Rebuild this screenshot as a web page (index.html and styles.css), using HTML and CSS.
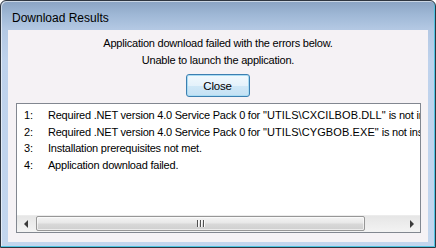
FILE: index.html
```html
<!DOCTYPE html>
<html>
<head>
<meta charset="utf-8">
<link rel="stylesheet" href="styles.css">
</head>
<body>
<div class="window">
  <div class="titlebar">Download Results</div>
  <div class="panel">
    <div class="msg">Application download failed with the errors below.<br>Unable to launch the application.</div>
    <div class="btnrow"><button class="btn">Close</button></div>
    <div class="list">
      <div class="rows">
        <div class="row"><span class="num">1:</span><span>Required .NET version 4.0 Service Pack 0 for <span class="path">"UTILS\CXCILBOB.DLL"</span> is not installed.</span></div>
        <div class="row"><span class="num">2:</span><span>Required .NET version 4.0 Service Pack 0 for <span class="path">"UTILS\CYGBOB.EXE"</span> is not installed.</span></div>
        <div class="row"><span class="num">3:</span><span>Installation prerequisites not met.</span></div>
        <div class="row"><span class="num">4:</span><span>Application download failed.</span></div>
      </div>
      <div class="hscroll">
        <div class="arrow"><span class="tri-left"></span></div>
        <div class="track">
          <div class="thumb"><span class="grip"></span><span class="grip"></span><span class="grip"></span></div>
        </div>
        <div class="arrow"><span class="tri-right"></span></div>
      </div>
    </div>
  </div>
</div>
</body>
</html>
```

FILE: styles.css
```css
html, body {
  margin: 0;
  padding: 0;
  background: #ffffff;
}

.window {
  width: 436px;
  height: 248px;
  box-sizing: border-box;
  border: 1px solid #2f3640;
  border-radius: 6px 6px 0 0;
  background: linear-gradient(to bottom, #8aa3c3 0px, #9fb8d6 14px, #b3c8e3 28px, #bed2ec 60px, #c3d6ee 100%);
  box-shadow: inset -1px -1px 0 #4fc4e2, inset 1px 1px 0 rgba(255,255,255,0.55);
  padding: 0 7px 5px 7px;
  display: flex;
  flex-direction: column;
  font-family: "Liberation Sans", Arial, sans-serif;
}

.titlebar {
  height: 29px;
  box-sizing: border-box;
  padding: 10px 0 0 4px;
  font-size: 12px;
  line-height: 14px;
  color: #000;
}

.panel {
  flex: 1;
  background: #f5f2f5;
  display: flex;
  flex-direction: column;
  min-height: 0;
}

.msg {
  padding-top: 5px;
  text-align: center;
  font-size: 11px;
  line-height: 17px;
  letter-spacing: -0.22px;
  color: #000;
}

.btnrow {
  display: flex;
  justify-content: center;
  margin-top: 5px;
}

.btn {
  width: 64px;
  height: 23px;
  box-sizing: border-box;
  margin: 0 0 0 -1px;
  padding: 0;
  border: 1px solid #3c7fb1;
  border-radius: 3px;
  background: linear-gradient(to bottom, #f2f9fd 0%, #e4f2fb 50%, #d0e8f7 51%, #c4e1f4 100%);
  box-shadow: inset 0 0 0 1px #a9dcf3;
  font-family: "Liberation Sans", Arial, sans-serif;
  font-size: 11.5px;
  letter-spacing: -0.2px;
  color: #000;
}

.list {
  margin: 6px 7px 0 8px;
  height: 130px;
  box-sizing: border-box;
  border: 1px solid #828790;
  background: #fff;
  display: flex;
  flex-direction: column;
}

.rows {
  flex: 1;
  overflow: hidden;
  padding: 3px 0 0 7px;
}

.row {
  display: flex;
  white-space: nowrap;
  font-size: 11px;
  line-height: 16.67px;
  letter-spacing: -0.22px;
  color: #000;
}

.path {
  letter-spacing: 0.1px;
}

.num {
  width: 24px;
  flex: none;
}

.hscroll {
  height: 17px;
  display: flex;
  background: linear-gradient(to bottom, #e6e6e6 0%, #f3f3f3 100%);
  border-top: 1px solid #ececec;
  box-sizing: border-box;
}

.arrow {
  width: 17px;
  flex: none;
  display: flex;
  align-items: center;
  justify-content: center;
}

.tri-left {
  width: 0;
  height: 0;
  border-top: 4px solid transparent;
  border-bottom: 4px solid transparent;
  border-right: 4px solid #3a3a3a;
}

.tri-right {
  width: 0;
  height: 0;
  border-top: 4px solid transparent;
  border-bottom: 4px solid transparent;
  border-left: 4px solid #3a3a3a;
}

.track {
  flex: 1;
  display: flex;
  padding: 0 0 0 2px;
}

.thumb {
  width: 329px;
  height: 15px;
  box-sizing: border-box;
  border: 1px solid #979797;
  border-radius: 2px;
  background: linear-gradient(to bottom, #f4f4f4 0%, #e8e8e8 45%, #d8d8d8 55%, #cfcfcf 100%);
  box-shadow: inset 0 0 0 1px rgba(255,255,255,0.6);
  display: flex;
  align-items: center;
  justify-content: center;
  gap: 1px;
}

.grip {
  width: 1px;
  height: 7px;
  background: #505050;
  border-right: 1px solid #fafafa;
}
```
